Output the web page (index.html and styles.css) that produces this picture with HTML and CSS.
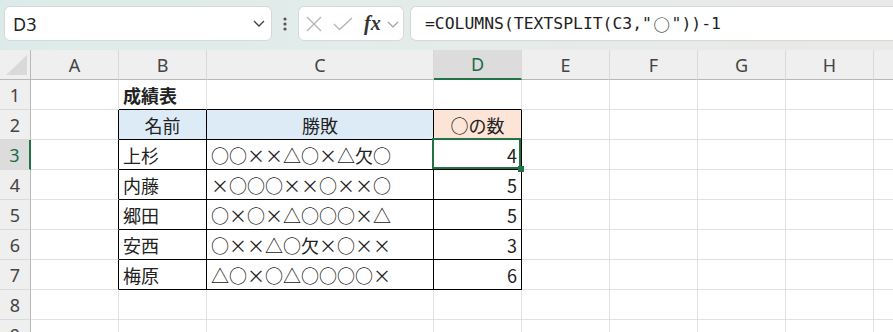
FILE: index.html
```html
<!DOCTYPE html>
<html lang="ja">
<head>
<meta charset="utf-8">
<link rel="stylesheet" href="styles.css">
</head>
<body>
<div class="app">
  <div class="toolbar">
    <div class="namebox">
      <span class="nb-text">D3</span>
      <svg class="chev" width="12" height="7" viewBox="0 0 12 7"><path d="M1 1 L6 6 L11 1" fill="none" stroke="#404040" stroke-width="1.3"/></svg>
    </div>
    <div class="dots">
      <svg width="4" height="14" viewBox="0 0 4 14"><circle cx="2" cy="2" r="1.6" fill="#555"/><circle cx="2" cy="7" r="1.6" fill="#555"/><circle cx="2" cy="12" r="1.6" fill="#555"/></svg>
    </div>
    <div class="fnbox">
      <svg class="ic-x" width="16" height="16" viewBox="0 0 16 16"><path d="M1 1 L15 15 M15 1 L1 15" stroke="#b4b4b4" stroke-width="1.3" fill="none"/></svg>
      <svg class="ic-check" width="20" height="14" viewBox="0 0 20 14"><path d="M1 7 L6.5 12.5 L19 1" stroke="#b4b4b4" stroke-width="1.3" fill="none"/></svg>
      <span class="fx">fx</span>
      <svg class="chev2" width="12" height="7" viewBox="0 0 12 7"><path d="M1 1 L6 6 L11 1" fill="none" stroke="#a0a0a0" stroke-width="1.2"/></svg>
    </div>
    <div class="formula">=COLUMNS(TEXTSPLIT(C3,"<span class="wide">○</span>"))-1</div>
  </div>

  <div class="sheet">
    <!-- header row -->
    <div class="c corner"><span class="tri"></span></div>
    <div class="c ch">A</div>
    <div class="c ch">B</div>
    <div class="c ch">C</div>
    <div class="c ch sel">D</div>
    <div class="c ch">E</div>
    <div class="c ch">F</div>
    <div class="c ch">G</div>
    <div class="c ch">H</div>
    <div class="c ch last"></div>

    <!-- row 1 -->
    <div class="c rh">1</div>
    <div class="c"></div>
    <div class="c tt title">成績表</div>
    <div class="c tt"></div>
    <div class="c tt"></div>
    <div class="c"></div><div class="c"></div><div class="c"></div><div class="c"></div><div class="c last"></div>

    <!-- row 2 -->
    <div class="c rh">2</div>
    <div class="c tl"></div>
    <div class="c tb hb center">名前</div>
    <div class="c tb hb center">勝敗</div>
    <div class="c tb hp center">○の数</div>
    <div class="c"></div><div class="c"></div><div class="c"></div><div class="c"></div><div class="c last"></div>

    <!-- row 3 -->
    <div class="c rh rsel">3</div>
    <div class="c tl"></div>
    <div class="c tb">上杉</div>
    <div class="c tb">○○××△○×△欠○</div>
    <div class="c tb num active">4</div>
    <div class="c"></div><div class="c"></div><div class="c"></div><div class="c"></div><div class="c last"></div>

    <!-- row 4 -->
    <div class="c rh">4</div>
    <div class="c tl"></div>
    <div class="c tb">内藤</div>
    <div class="c tb">×○○○××○××○</div>
    <div class="c tb num">5</div>
    <div class="c"></div><div class="c"></div><div class="c"></div><div class="c"></div><div class="c last"></div>

    <!-- row 5 -->
    <div class="c rh">5</div>
    <div class="c tl"></div>
    <div class="c tb">郷田</div>
    <div class="c tb">○×○×△○○○×△</div>
    <div class="c tb num">5</div>
    <div class="c"></div><div class="c"></div><div class="c"></div><div class="c"></div><div class="c last"></div>

    <!-- row 6 -->
    <div class="c rh">6</div>
    <div class="c tl"></div>
    <div class="c tb">安西</div>
    <div class="c tb">○××△○欠×○××</div>
    <div class="c tb num">3</div>
    <div class="c"></div><div class="c"></div><div class="c"></div><div class="c"></div><div class="c last"></div>

    <!-- row 7 -->
    <div class="c rh">7</div>
    <div class="c tl"></div>
    <div class="c tb">梅原</div>
    <div class="c tb">△○×○△○○○○×</div>
    <div class="c tb num">6</div>
    <div class="c"></div><div class="c"></div><div class="c"></div><div class="c"></div><div class="c last"></div>

    <!-- row 8 -->
    <div class="c rh">8</div>
    <div class="c"></div><div class="c"></div><div class="c"></div><div class="c"></div>
    <div class="c"></div><div class="c"></div><div class="c"></div><div class="c"></div><div class="c last"></div>

    <!-- row 9 -->
    <div class="c rh">9</div>
    <div class="c"></div><div class="c"></div><div class="c"></div><div class="c"></div>
    <div class="c"></div><div class="c"></div><div class="c"></div><div class="c"></div><div class="c last"></div>
  </div>
</div>
</body>
</html>
```
FILE: styles.css
```css
* { box-sizing: border-box; }
html, body {
  margin: 0;
  padding: 0;
  background: #ffffff;
  overflow: hidden;
}
.app {
  width: 893px;
  height: 332px;
  overflow: hidden;
}
.toolbar {
  height: 50px;
  display: flex;
  align-items: flex-start;
  padding: 6px 0 0 4px;
  background: linear-gradient(90deg, #dcebe9 0%, #e3ecea 40%, #eae9e7 100%);
}
.namebox {
  width: 268px;
  height: 35px;
  background: #fff;
  border: 1px solid #d6d9d8;
  border-radius: 6px;
  display: flex;
  align-items: center;
  padding: 0 6px 0 8px;
  font-family: "Noto Sans", "Open Sans", sans-serif;
  font-size: 18px;
  color: #222;
}
.nb-text { flex: 1; }
.dots {
  width: 26px;
  height: 35px;
  display: flex;
  align-items: center;
  justify-content: center;
}
.fnbox {
  width: 106px;
  height: 35px;
  background: #fff;
  border: 1px solid #d6d9d8;
  border-radius: 6px;
  display: flex;
  align-items: center;
  padding-left: 7px;
}
.ic-x { margin-right: 11px; }
.ic-check { margin-right: 11px; }
.fx {
  font-family: "Liberation Serif", "DejaVu Serif", serif;
  font-style: italic;
  font-weight: bold;
  font-size: 20px;
  color: #333;
  margin-right: 6px;
  line-height: 1;
  margin-top: -2px;
}
.chev2 { margin-top: 1px; }
.formula {
  flex: 1;
  height: 35px;
  margin-left: 6px;
  background: #fff;
  border: 1px solid #d6d9d8;
  border-right: none;
  border-radius: 6px 0 0 6px;
  display: flex;
  align-items: center;
  padding-left: 14px;
  font-family: "DejaVu Sans Mono", "Liberation Mono", monospace;
  font-size: 16.4px;
  color: #222;
  white-space: nowrap;
}
.wide {
  font-family: "Noto Sans CJK JP", sans-serif;
  font-size: 16.4px;
  display: inline-block;
  width: 19.6px;
  text-align: center;
}

.sheet {
  display: grid;
  grid-template-columns: 31px 88px 88px 227px 88px 88px 88px 88px 88px 40px;
  grid-auto-rows: 30px;
  font-family: "Noto Sans CJK JP", sans-serif;
  font-size: 18px;
  color: #222;
}
.c {
  border-right: 1px solid #e1e1e1;
  border-bottom: 1px solid #e1e1e1;
  display: flex;
  align-items: center;
  padding: 0 4px;
  white-space: nowrap;
  overflow: visible;
  line-height: 1;
}
.corner {
  background: #efefef;
  border-right: 1px solid #b8b8b8;
  border-bottom: 1px solid #b8b8b8;
  padding: 0;
  align-items: flex-end;
  justify-content: flex-end;
}
.tri {
  width: 0;
  height: 0;
  border-style: solid;
  border-width: 0 0 20px 21px;
  border-color: transparent transparent #d9d9d9 transparent;
  margin: 0 3px 4px 0;
}
.ch {
  background: #efefef;
  border-right: 1px solid #d9d9d9;
  border-bottom: 1px solid #b8b8b8;
  justify-content: center;
  font-family: "Noto Sans", "Open Sans", sans-serif;
  font-size: 18px;
  color: #444;
}
.ch.sel {
  background: #dcdcdc;
  border-bottom: 2px solid #217346;
  color: #1b6b43;
}
.rh {
  background: #efefef;
  border-right: 1px solid #b8b8b8;
  border-bottom: 1px solid #dadada;
  justify-content: center;
  font-family: "Noto Sans", "Open Sans", sans-serif;
  font-size: 18px;
  color: #444;
  padding: 0;
}
.rh.rsel {
  background: #dcdcdc;
  border-right: 2px solid #217346;
  color: #1b6b43;
}
.last { border-right: none; }
.title { font-weight: bold; }
.tt { border-bottom-color: #000; }
.tl { border-right-color: #000; }
.tb { border-right-color: #000; border-bottom-color: #000; }
.hb { background: #ddebf7; }
.hp { background: #fce4d6; }
.center { justify-content: center; }
.num { justify-content: flex-end; }
.active { position: relative; }
.active::after {
  content: "";
  position: absolute;
  left: -2px;
  top: -2px;
  right: 0;
  bottom: 0;
  border: 2px solid #217346;
}
.active::before {
  content: "";
  position: absolute;
  right: -3px;
  bottom: -3px;
  width: 6px;
  height: 6px;
  background: #217346;
  z-index: 2;
}
```
